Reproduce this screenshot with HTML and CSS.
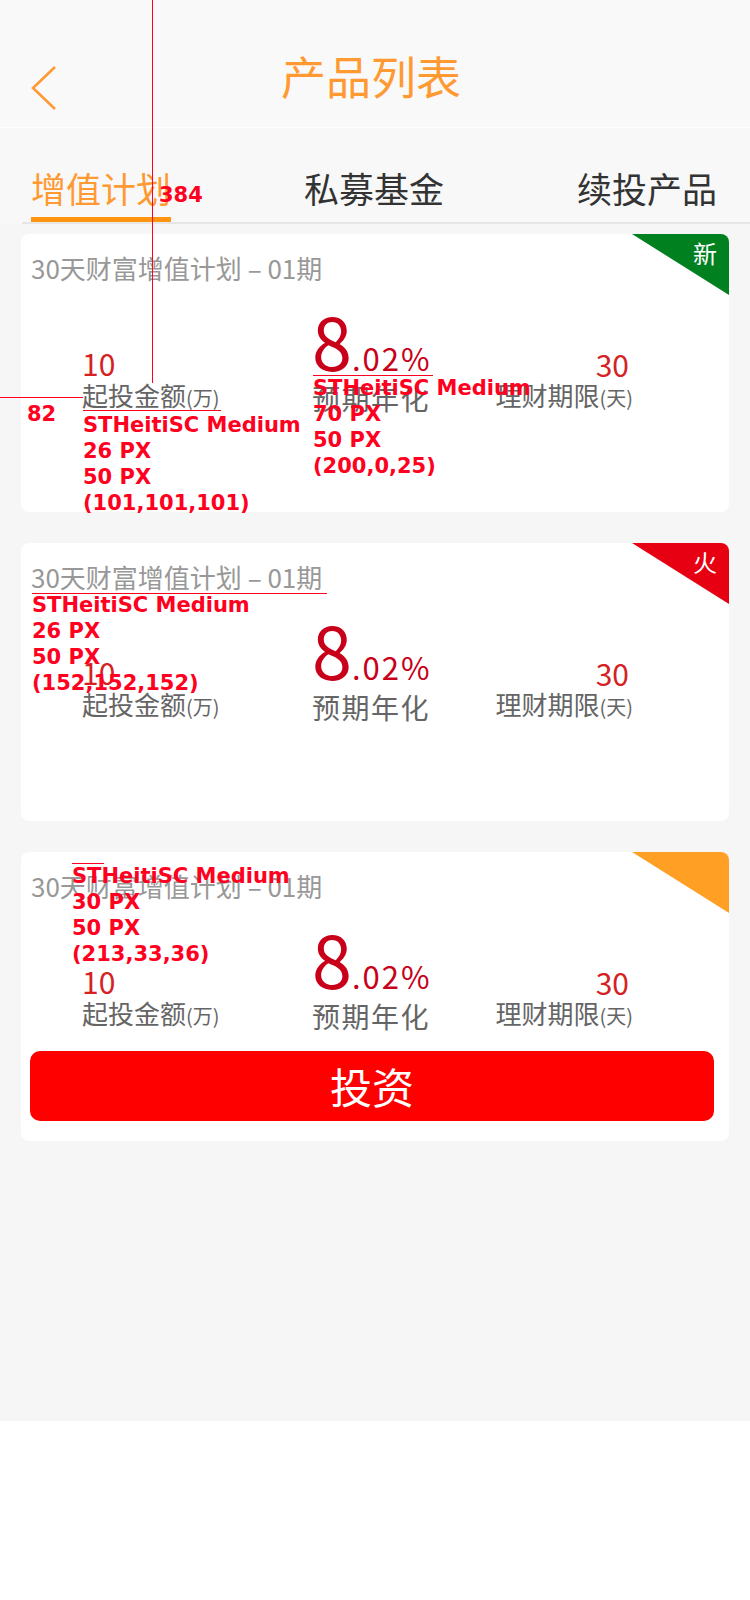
FILE: index.html
```html
<!DOCTYPE html>
<html lang="zh-CN">
<head>
<meta charset="utf-8">
<title>产品列表</title>
<link rel="stylesheet" href="styles.css">
</head>
<body>
<div class="page">
  <header class="nav">
    <svg class="back" width="28" height="44" viewBox="0 0 28 44"><polyline points="25,1 3,22 25,43" fill="none" stroke="#ff9a33" stroke-width="2.6"/></svg>
    <h1 class="nav-title">产品列表</h1>
    <span class="nav-spacer"></span>
  </header>

  <div class="tabbar">
    <div class="tabs">
      <span class="tab active">增值计划</span>
      <span class="tab">私募基金</span>
      <span class="tab">续投产品</span>
    </div>
  </div>

  <div class="list">
    <div class="card card-fixed">
      <div class="ribbon ribbon-green"><span>新</span></div>
      <div class="card-title">30天财富增值计划 – 01期</div>
      <div class="stats">
        <div class="col col-amount">
          <div class="val">10</div>
          <div class="lbl">起投金额<small>(万)</small></div>
        </div>
        <div class="col col-rate">
          <div class="rate"><span class="big">8</span><span class="frac">.02%</span></div>
          <div class="lbl-rate">预期年化</div>
        </div>
        <div class="col col-term">
          <div class="val">30</div>
          <div class="lbl">理财期限<small>(天)</small></div>
        </div>
      </div>
    </div>

    <div class="card card-fixed">
      <div class="ribbon ribbon-red"><span>火</span></div>
      <div class="card-title">30天财富增值计划 – 01期</div>
      <div class="stats">
        <div class="col col-amount">
          <div class="val">10</div>
          <div class="lbl">起投金额<small>(万)</small></div>
        </div>
        <div class="col col-rate">
          <div class="rate"><span class="big">8</span><span class="frac">.02%</span></div>
          <div class="lbl-rate">预期年化</div>
        </div>
        <div class="col col-term">
          <div class="val">30</div>
          <div class="lbl">理财期限<small>(天)</small></div>
        </div>
      </div>
    </div>

    <div class="card">
      <div class="ribbon ribbon-orange"></div>
      <div class="card-title">30天财富增值计划 – 01期</div>
      <div class="stats">
        <div class="col col-amount">
          <div class="val">10</div>
          <div class="lbl">起投金额<small>(万)</small></div>
        </div>
        <div class="col col-rate">
          <div class="rate"><span class="big">8</span><span class="frac">.02%</span></div>
          <div class="lbl-rate">预期年化</div>
        </div>
        <div class="col col-term">
          <div class="val">30</div>
          <div class="lbl">理财期限<small>(天)</small></div>
        </div>
      </div>
      <button class="btn">投资</button>
    </div>
  </div>

  <div class="marks">
    <div class="mk-line mk-vline"></div>
    <div class="mk-line mk-hline"></div>
    <div class="mk-line mk-u1"></div>
    <div class="mk-line mk-u2"></div>
    <div class="mk-line mk-u3"></div>
    <div class="mk-line mk-u4"></div>
    <div class="mk-text mk-384">384</div>
    <div class="mk-text mk-82">82</div>
    <div class="mk-text mk-s1">STHeitiSC Medium<br>26 PX<br>50 PX<br>(101,101,101)</div>
    <div class="mk-text mk-s2">STHeitiSC Medium<br>70 PX<br>50 PX<br>(200,0,25)</div>
    <div class="mk-text mk-s3">STHeitiSC Medium<br>26 PX<br>50 PX<br>(152,152,152)</div>
    <div class="mk-text mk-s4">STHeitiSC Medium<br>30 PX<br>50 PX<br>(213,33,36)</div>
  </div>
</div>
</body>
</html>
```

FILE: styles.css
```css
* { box-sizing: border-box; }
html, body { margin: 0; padding: 0; }
body {
  background: #ffffff;
  font-family: "Noto Sans CJK SC", "Noto Sans", sans-serif;
}
.page {
  position: relative;
  width: 750px;
  min-height: 1421px;
  background: #f6f6f6;
}

/* header */
.nav {
  display: grid;
  grid-template-columns: 1fr auto 1fr;
  align-items: start;
  height: 128px;
  padding-top: 53px;
  background: #f9f9f9;
  border-bottom: 1px solid #ffffff;
}
.back { display: block; margin: 13px 0 0 30px; }
.nav-title {
  margin: 0 8px 0 0;
  font-size: 45px;
  line-height: 1;
  font-weight: 400;
  color: #ff9a33;
}

/* tabs */
.tabbar {
  background: #f8f8f8;
  padding-left: 22px;
}
.tabs {
  display: flex;
  justify-content: space-between;
  padding: 42px 33px 0 9px;
  border-bottom: 2px solid #e6e6e6;
}
.tab {
  font-size: 35px;
  line-height: 1;
  color: #333333;
  padding-bottom: 12px;
  border-bottom: 5px solid transparent;
}
.tab.active {
  color: #ff9a33;
  border-bottom-color: #ff9410;
}

/* cards */
.list {
  display: flex;
  flex-direction: column;
  gap: 31px;
  padding: 10px 21px 0 21px;
}
.card {
  position: relative;
  overflow: hidden;
  background: #ffffff;
  border-radius: 8px;
  padding: 21px 0 20px 0;
}
.card-fixed { min-height: 278px; }
.card-title {
  padding-left: 10px;
  font-size: 26px;
  line-height: 1;
  color: rgb(152,152,152);
  white-space: pre;
}

.ribbon {
  position: absolute;
  top: 0;
  right: 0;
  width: 97px;
  height: 61px;
  clip-path: polygon(0 0, 100% 0, 100% 100%);
  text-align: right;
  padding: 7px 12px 0 0;
  color: #ffffff;
  font-size: 24px;
  line-height: 1;
}
.ribbon-green { background: #00801f; }
.ribbon-red { background: #e60012; }
.ribbon-orange { background: #ffa025; }

.stats {
  display: flex;
  align-items: flex-start;
  margin-top: 23px;
  padding: 0 96px 0 61px;
}
.col-amount { width: 230px; padding-top: 44px; }
.col-term { margin-left: auto; padding-top: 45px; }
.val {
  font-size: 30px;
  line-height: 1;
  color: rgb(213,33,36);
}
.col-term .val { text-align: right; padding-right: 4px; }
.lbl {
  margin-top: 4px;
  font-size: 26px;
  line-height: 1;
  color: rgb(101,101,101);
}
.col-term .lbl { margin-top: 3px; }
.lbl small { font-size: 20px; }
.rate {
  line-height: 1;
  font-size: 72px;
  color: rgb(200,0,25);
  white-space: nowrap;
}
.rate .big { font-size: 72px; font-weight: 400; }
.rate .frac { font-size: 31px; letter-spacing: 2px; }
.lbl-rate {
  margin-top: 8px;
  font-size: 28px;
  line-height: 1;
  letter-spacing: 1.5px;
  color: rgb(101,101,101);
}

.btn {
  display: block;
  width: calc(100% - 24px);
  height: 70px;
  margin: 21px 15px 0 9px;
  border: 0;
  border-radius: 10px;
  background: #ff0000;
  color: #ffffff;
  font-family: "Noto Sans CJK SC", sans-serif;
  font-size: 42px;
  line-height: 1;
  padding: 0;
}

/* redline annotations */
.marks {
  position: absolute;
  inset: 0;
  pointer-events: none;
}
.mk-line { position: absolute; background: #ff0020; }
.mk-vline { left: 152px; top: 0; width: 1px; height: 383px; }
.mk-hline { left: 0; top: 397px; width: 83px; height: 1px; }
.mk-u1 { left: 83px; top: 410px; width: 138px; height: 1px; }
.mk-u2 { left: 313px; top: 375px; width: 120px; height: 1px; }
.mk-u3 { left: 32px; top: 593px; width: 295px; height: 1px; }
.mk-u4 { left: 72px; top: 863px; width: 32px; height: 1px; }
.mk-text {
  position: absolute;
  font-family: "DejaVu Sans", sans-serif;
  font-weight: 700;
  font-size: 21px;
  line-height: 26px;
  color: #ff0020;
  white-space: nowrap;
}
.mk-384 { left: 159px; top: 182px; }
.mk-82 { left: 27px; top: 401px; }
.mk-s1 { left: 83px; top: 412px; }
.mk-s2 { left: 313px; top: 375px; }
.mk-s3 { left: 32px; top: 592px; }
.mk-s4 { left: 72px; top: 863px; }
```
